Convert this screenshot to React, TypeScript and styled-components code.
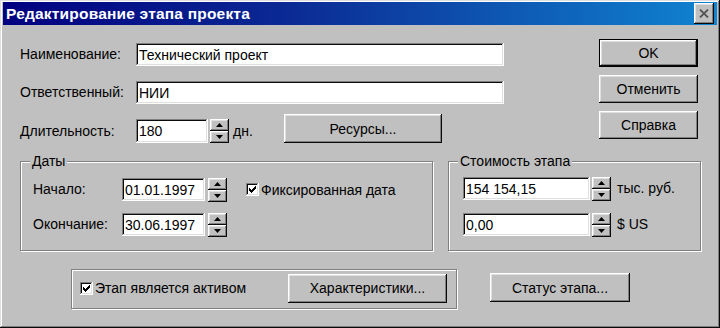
import React from "react";
import styled, { createGlobalStyle } from "styled-components";

const Global = createGlobalStyle`
  html, body { margin: 0; padding: 0; background: #c0c0c0; }
  body { font-family: "Liberation Sans", Arial, sans-serif; font-size: 14px; color: #000; }
  * { box-sizing: border-box; }
`;

const raisedShadow = `inset -1px -1px #0a0a0a, inset 1px 1px #ffffff, inset -2px -2px #808080, inset 2px 2px #dfdfdf`;
const sunkenShadow = `inset -1px -1px #ffffff, inset 1px 1px #808080, inset -2px -2px #dfdfdf, inset 2px 2px #0a0a0a`;

const Window = styled.div`
  width: 720px;
  height: 328px;
  background: #c0c0c0;
  padding: 2px 3px 3px 3px;
  box-shadow: inset -1px -1px #0a0a0a, inset 1px 1px #dfdfdf, inset -2px -2px #808080, inset 2px 2px #ffffff;
  display: flex;
  flex-direction: column;
`;

const TitleBar = styled.div`
  height: 23px;
  background: linear-gradient(90deg, #000080 0%, #0b2a94 40%, #1084d0 100%);
  display: flex;
  align-items: center;
  justify-content: space-between;
  padding: 0 3px 0 3px;
`;

const Title = styled.span`
  color: #fff;
  font-weight: bold;
  font-size: 15.5px;
  letter-spacing: 0.2px;
`;

const CloseButton = styled.div`
  width: 20px;
  height: 21px;
  background: #c0c0c0;
  box-shadow: ${raisedShadow};
  display: flex;
  align-items: center;
  justify-content: center;
`;

const Body = styled.div`
  flex: 1;
  display: flex;
  flex-direction: column;
  padding: 0 19px 0 17px;
`;

const TopSection = styled.div`
  display: flex;
  justify-content: space-between;
  align-items: flex-start;
`;

const Form = styled.div`
  display: flex;
  flex-direction: column;
  padding-top: 18px;
`;

const Row = styled.div<{ $mt?: number; $h?: number; $end?: boolean }>`
  display: flex;
  align-items: ${(p) => (p.$end ? "flex-end" : "center")};
  height: ${(p) => p.$h ?? 23}px;
  margin-top: ${(p) => p.$mt ?? 0}px;
`;

const Label = styled.span<{ $w: number; $h?: number }>`
  width: ${(p) => p.$w}px;
  flex: none;
  white-space: nowrap;
  line-height: ${(p) => p.$h ?? 23}px;
`;

const Field = styled.div<{ $w: number; $h?: number }>`
  width: ${(p) => p.$w}px;
  height: ${(p) => p.$h ?? 23}px;
  flex: none;
  background: #fff;
  box-shadow: ${sunkenShadow};
  padding: 0 3px;
  display: flex;
  align-items: center;
  white-space: nowrap;
  overflow: hidden;
`;

const Unit = styled.span<{ $ml: number; $w?: number; $h?: number }>`
  margin-left: ${(p) => p.$ml}px;
  ${(p) => (p.$w ? `width: ${p.$w}px;` : "")}
  flex: none;
  white-space: nowrap;
  line-height: ${(p) => p.$h ?? 23}px;
`;

const SpinnerBox = styled.div<{ $ml: number }>`
  display: flex;
  flex-direction: column;
  width: 19px;
  height: 24px;
  margin-left: ${(p) => p.$ml}px;
  flex: none;
`;

const SpinButton = styled.div`
  flex: 1;
  background: #c0c0c0;
  box-shadow: ${raisedShadow};
  display: flex;
  align-items: center;
  justify-content: center;
`;

const Button = styled.div<{ $w: number; $h?: number; $ml?: number; $mt?: number; $default?: boolean }>`
  width: ${(p) => p.$w}px;
  height: ${(p) => p.$h ?? 28}px;
  margin-left: ${(p) => p.$ml ?? 0}px;
  margin-top: ${(p) => p.$mt ?? 0}px;
  flex: none;
  background: #c0c0c0;
  box-shadow: ${(p) =>
    p.$default
      ? "inset 0 0 0 1px #000, inset -2px -2px #0a0a0a, inset 2px 2px #ffffff, inset -3px -3px #808080, inset 3px 3px #dfdfdf"
      : raisedShadow};
  display: flex;
  align-items: center;
  justify-content: center;
  white-space: nowrap;
`;

const ButtonColumn = styled.div`
  display: flex;
  flex-direction: column;
  gap: 8px;
  padding-top: 14px;
`;

const GroupsRow = styled.div`
  display: flex;
  gap: 15px;
  margin-top: 18px;
`;

const Group = styled.div<{ $w: number; $h: number; $pl: number; $pt: number }>`
  position: relative;
  width: ${(p) => p.$w}px;
  height: ${(p) => p.$h}px;
  flex: none;
  border: 1px solid #808080;
  box-shadow: inset 1px 1px #ffffff, 1px 1px #ffffff;
  padding: ${(p) => p.$pt}px 0 0 ${(p) => p.$pl}px;
`;

const Legend = styled.span`
  position: absolute;
  top: -9px;
  left: 9px;
  padding: 0 2px;
  line-height: 16px;
  background: #c0c0c0;
`;

const BottomRow = styled.div`
  display: flex;
  align-items: flex-start;
  margin-top: 18px;
  padding-left: 51px;
`;

const BottomGroup = styled.div`
  width: 386px;
  height: 40px;
  flex: none;
  border: 1px solid #808080;
  box-shadow: inset 1px 1px #ffffff, 1px 1px #ffffff;
  display: flex;
  align-items: center;
  justify-content: space-between;
  padding: 0 9px 2px 8px;
`;

const CheckRow = styled.div<{ $ml?: number }>`
  display: flex;
  align-items: center;
  margin-left: ${(p) => p.$ml ?? 0}px;
  white-space: nowrap;
`;

const CheckBox = styled.span`
  width: 13px;
  height: 13px;
  flex: none;
  background: #fff;
  box-shadow: ${sunkenShadow};
  display: inline-flex;
  align-items: center;
  justify-content: center;
  margin-right: 2px;
`;

const UpArrow = () => (
  <svg width="7" height="4" viewBox="0 0 7 4">
    <path d="M3.5 0 L7 4 L0 4 Z" fill="#000" />
  </svg>
);

const DownArrow = () => (
  <svg width="7" height="4" viewBox="0 0 7 4">
    <path d="M0 0 L7 0 L3.5 4 Z" fill="#000" />
  </svg>
);

const Spinner = ({ ml }: { ml: number }) => (
  <SpinnerBox $ml={ml}>
    <SpinButton>
      <UpArrow />
    </SpinButton>
    <SpinButton>
      <DownArrow />
    </SpinButton>
  </SpinnerBox>
);

const CheckMark = () => (
  <svg width="7" height="7" viewBox="0 0 7 7" shapeRendering="crispEdges">
    <rect x="6" y="0" width="1" height="3" fill="#000" />
    <rect x="5" y="1" width="1" height="3" fill="#000" />
    <rect x="4" y="2" width="1" height="3" fill="#000" />
    <rect x="3" y="3" width="1" height="3" fill="#000" />
    <rect x="2" y="4" width="1" height="3" fill="#000" />
    <rect x="1" y="3" width="1" height="3" fill="#000" />
    <rect x="0" y="2" width="1" height="3" fill="#000" />
  </svg>
);

const Check = ({ label, ml }: { label: string; ml?: number }) => (
  <CheckRow $ml={ml}>
    <CheckBox>
      <CheckMark />
    </CheckBox>
    <span>{label}</span>
  </CheckRow>
);

const CloseIcon = () => (
  <svg width="10" height="9" viewBox="0 0 10 9">
    <path d="M1 0.5 L9 8.5 M9 0.5 L1 8.5" stroke="#555" strokeWidth="1.8" />
  </svg>
);

export default function App() {
  return (
    <>
      <Global />
      <Window>
        <TitleBar>
          <Title>Редактирование этапа проекта</Title>
          <CloseButton>
            <CloseIcon />
          </CloseButton>
        </TitleBar>
        <Body>
          <TopSection>
            <Form>
              <Row>
                <Label $w={116}>Наименование:</Label>
                <Field $w={368}>Технический проект</Field>
              </Row>
              <Row $mt={15}>
                <Label $w={116}>Ответственный:</Label>
                <Field $w={368}>НИИ</Field>
              </Row>
              <Row $mt={10} $h={29} $end>
                <Label $w={116} $h={24}>Длительность:</Label>
                <Field $w={72} $h={24}>180</Field>
                <Spinner ml={2} />
                <Unit $ml={4} $w={51} $h={24}>дн.</Unit>
                <Button $w={158} $h={29}>Ресурсы...</Button>
              </Row>
            </Form>
            <ButtonColumn>
              <Button $w={99} $default>OK</Button>
              <Button $w={99}>Отменить</Button>
              <Button $w={99}>Справка</Button>
            </ButtonColumn>
          </TopSection>

          <GroupsRow>
            <Group $w={413} $h={90} $pl={12} $pt={16}>
              <Legend>Даты</Legend>
              <Row>
                <Label $w={89}>Начало:</Label>
                <Field $w={83}>01.01.1997</Field>
                <Spinner ml={3} />
                <Check label="Фиксированная дата" ml={19} />
              </Row>
              <Row $mt={12}>
                <Label $w={89}>Окончание:</Label>
                <Field $w={83}>30.06.1997</Field>
                <Spinner ml={3} />
              </Row>
            </Group>
            <Group $w={253} $h={90} $pl={14} $pt={15}>
              <Legend>Стоимость этапа</Legend>
              <Row>
                <Field $w={127}>154 154,15</Field>
                <Spinner ml={2} />
                <Unit $ml={6}>тыс. руб.</Unit>
              </Row>
              <Row $mt={13}>
                <Field $w={127}>0,00</Field>
                <Spinner ml={2} />
                <Unit $ml={6}>$ US</Unit>
              </Row>
            </Group>
          </GroupsRow>

          <BottomRow>
            <BottomGroup>
              <Check label="Этап является активом" />
              <Button $w={159} $h={29}>Характеристики...</Button>
            </BottomGroup>
            <Button $w={140} $h={29} $ml={33} $mt={4}>Статус этапа...</Button>
          </BottomRow>
        </Body>
      </Window>
    </>
  );
}
